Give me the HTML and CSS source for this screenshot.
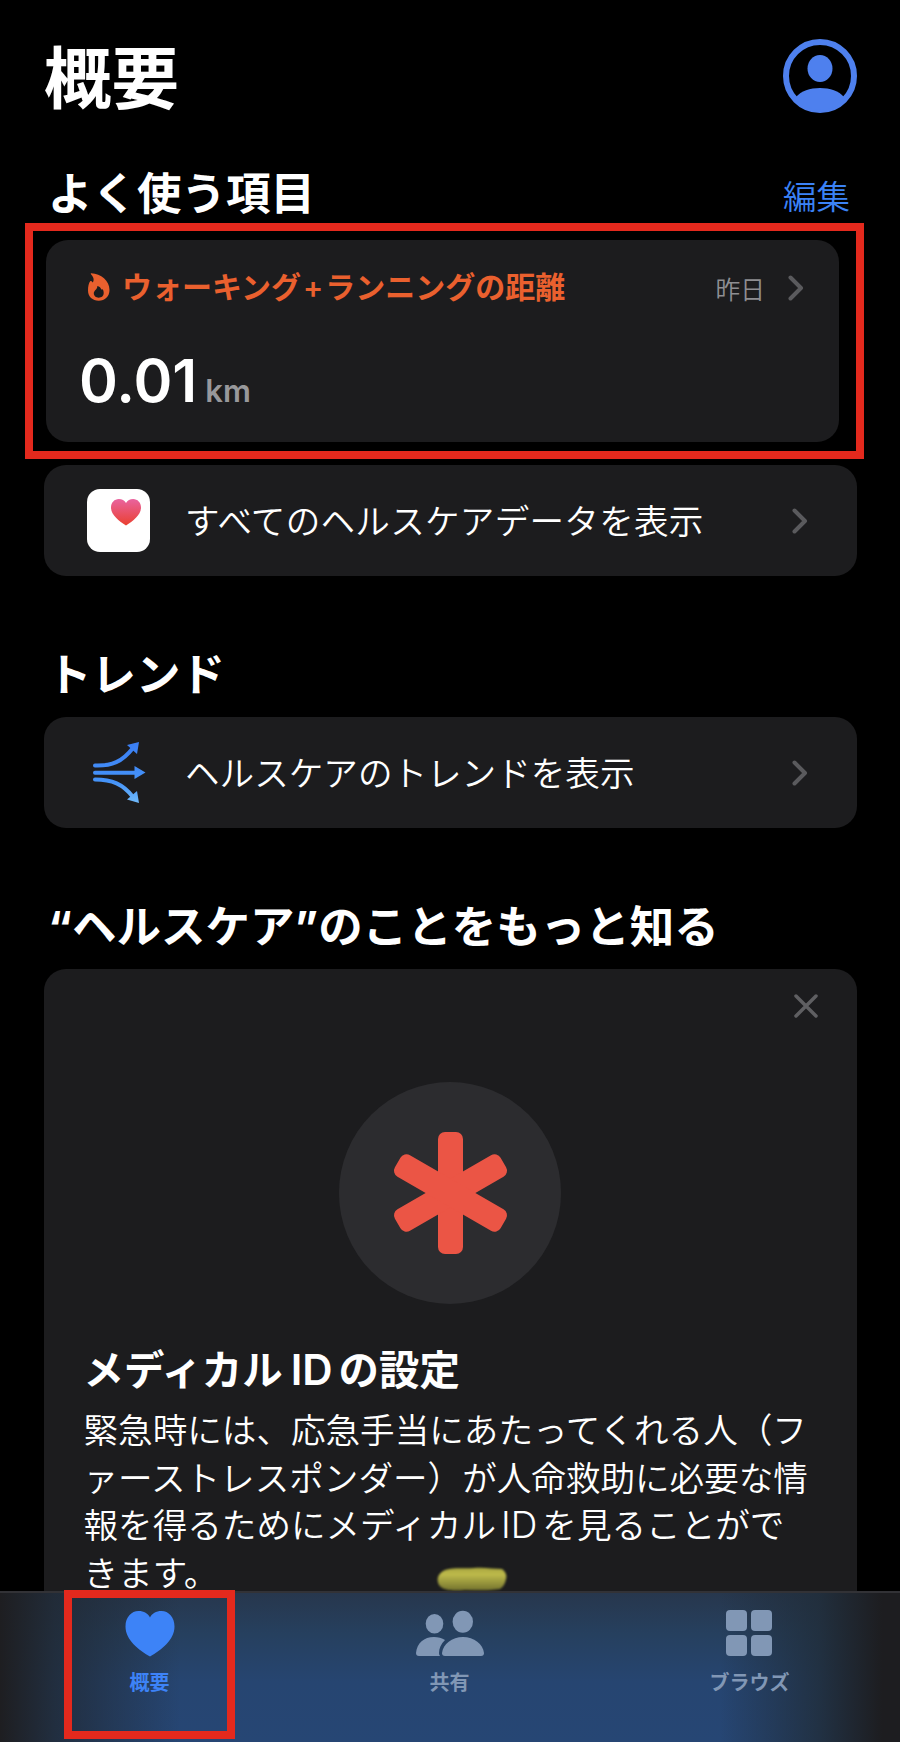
FILE: index.html
```html
<!DOCTYPE html>
<html lang="ja">
<head>
    <meta charset="UTF-8">
    <meta name="viewport" content="width=device-width, initial-scale=1">
    <title>概要</title>
    <link rel="stylesheet" href="styles.css">
</head>
<body>
<main class="content">
    <header class="header">
        <h1>概要</h1>
        <svg class="avatar" viewBox="0 0 74 74">
            <circle cx="37" cy="37" r="34" fill="none" stroke="#4e80ee" stroke-width="6"/>
            <ellipse cx="37" cy="29.5" rx="12.5" ry="13.5" fill="#4e80ee"/>
            <path d="M13 58C18 52 27 49 37 49S56 52 61 58C55 66 47 71 37 71S19 66 13 58Z" fill="#4e80ee"/>
        </svg>
    </header>

    <div class="section-title first">
        <h2>よく使う項目</h2>
        <a class="edit">編集</a>
    </div>
    <div class="highlight">
        <div class="card metric">
            <div class="metric-head">
                <svg class="flame" viewBox="0 0 22 28">
                    <path fill="#ea602e" fill-rule="evenodd" d="M3.200 .3C13 .8 21.500 7.500 21.500 17C21.500 23.500 17 27.700 10.700 27.700C4.500 27.700 0 23.700 0 17.500C0 13.500 .8 9.500 2.200 8.200C3 7.600 4 8.500 4.800 9.500C6 7.500 6.300 5 3.200 1.500C2.600 .8 2.700 .3 3.200 .3ZM9.300 13C9.800 16 5.800 17.500 5.800 20.300C5.800 23 8 24.700 10.700 24.700C13.600 24.700 15.700 22.800 15.700 20C15.700 17.300 14.500 15.300 13.300 16.800C13 15 11.500 13.300 9.300 13Z"/>
                </svg>
                <span class="metric-name">ウォーキング<span class="latin">+</span>ランニングの距離</span>
                <span class="metric-date">昨日</span>
                <svg class="chevron" viewBox="0 0 16 26"><path d="M2.500 2.500L13 13L2.500 23.500"/></svg>
            </div>
            <div class="metric-value">0.01<span class="unit">km</span></div>
        </div>
    </div>
    <div class="card row">
        <svg class="row-icon" viewBox="0 0 63 63">
            <defs>
                <linearGradient id="pink" x1="0" y1="0" x2="0" y2="1">
                    <stop offset="0" stop-color="#e9639f"/>
                    <stop offset="1" stop-color="#ea4030"/>
                </linearGradient>
            </defs>
            <rect width="63" height="63" rx="13" fill="#fff"/>
            <path d="M39 36.500C32 32 24 26 24 18.500C24 13.500 27.500 10 31.800 10C35 10 37.500 11.500 39 14C40.500 11.500 43 10 46.200 10C50.500 10 54 13.500 54 18.500C54 26 46 32 39 36.500Z" fill="url(#pink)"/>
        </svg>
        <span class="row-text wide">すべてのヘルスケアデータを表示</span>
        <svg class="chevron" viewBox="0 0 16 26"><path d="M2.500 2.500L13 13L2.500 23.500"/></svg>
    </div>

    <div class="section-title">
        <h2 class="trend-title">トレンド</h2>
    </div>
    <div class="card row">
        <svg class="row-icon" viewBox="0 0 63 63">
            <defs>
                <linearGradient id="blue" gradientUnits="userSpaceOnUse" x1="0" y1="0" x2="0" y2="63">
                    <stop offset="0" stop-color="#3a7df4"/>
                    <stop offset=".65" stop-color="#4593f8"/>
                    <stop offset="1" stop-color="#72bcfb"/>
                </linearGradient>
            </defs>
            <g fill="none" stroke="url(#blue)" stroke-width="4" stroke-linecap="round">
                <path d="M8 24.500C25 25 35 21 46 7"/>
                <path d="M8 31.800L50 31.700"/>
                <path d="M8 38.500C25 38.500 36 43 46 56"/>
            </g>
            <path d="M52 1L40 4L50 13ZM58.500 31.500L47.500 25V38ZM52 62L40 58.500L50 50Z" fill="url(#blue)"/>
        </svg>
        <span class="row-text">ヘルスケアのトレンドを表示</span>
        <svg class="chevron" viewBox="0 0 16 26"><path d="M2.500 2.500L13 13L2.500 23.500"/></svg>
    </div>

    <div class="section-title learn">
        <h2><span class="latin">“</span>ヘルスケア<span class="latin">”</span>のことをもっと知る</h2>
    </div>
    <div class="card article">
        <svg class="close" viewBox="0 0 24 24"><path d="M2 2L22 22M22 2L2 22"/></svg>
        <svg class="medical" viewBox="0 0 222 222">
            <circle cx="111" cy="111" r="111" fill="#2c2c2f"/>
            <g fill="#eb5545">
                <rect x="99" y="50" width="25" height="122" rx="7"/>
                <rect x="99" y="50" width="25" height="122" rx="7" transform="rotate(60 111.500 111)"/>
                <rect x="99" y="50" width="25" height="122" rx="7" transform="rotate(-60 111.500 111)"/>
            </g>
        </svg>
        <h3>メディカル<span class="latin">ID</span>の設定</h3>
        <p>緊急時には、応急手当にあたってくれる人（フ<br>ァーストレスポンダー）が人命救助に必要な情<br>報を得るためにメディカル<span class="latin">ID</span>を見ることがで<br>きます。</p>
        <svg class="marker" viewBox="0 0 72 26">
            <defs>
                <linearGradient id="yellow" x1="0" y1="0" x2="0" y2="1">
                    <stop offset="0" stop-color="#a9a740"/>
                    <stop offset=".3" stop-color="#bdba4b"/>
                    <stop offset="1" stop-color="#73722e"/>
                </linearGradient>
            </defs>
            <path d="M9 4C20 1 29 3 38 2C48 1 58 3 66 3C70 6 71 10 70 13C69 18 67 21 64 23C52 25 40 24 29 24C20 25 10 25 5 21C0 17 0 8 9 4Z" fill="url(#yellow)"/>
        </svg>
    </div>
</main>

<nav class="tabbar">
    <a class="tab active">
        <svg class="tab-icon" viewBox="0 0 70 48">
            <path d="M35 47.500C24 41 10.500 31 10.500 17.500C10.500 8 16.500 2 23.500 2C29 2 33 4.500 35 8.500C37 4.500 41 2 46.500 2C53.500 2 59.500 8 59.500 17.500C59.500 31 46 41 35 47.500Z"/>
        </svg>
        <span>概要</span>
    </a>
    <a class="tab">
        <svg class="tab-icon" viewBox="0 0 70 48">
            <ellipse cx="19.500" cy="14.800" rx="8.800" ry="9.800"/>
            <ellipse cx="47.800" cy="12.800" rx="10.200" ry="11"/>
            <path d="M4 47Q1 47 1 44C2 34 9 28 19 28C23 28 27 29 30 31C26 35 24 39 24 44Q24 46 25 47Z"/>
            <path d="M30 47Q27 47 27 44C28 35 37 28 48 28C59 28 68 35 69 44Q69 47 66 47Z"/>
        </svg>
        <span>共有</span>
    </a>
    <a class="tab">
        <svg class="tab-icon" viewBox="0 0 70 48">
            <rect x="11" y="1" width="21" height="21" rx="4"/>
            <rect x="36" y="1" width="21" height="21" rx="4"/>
            <rect x="11" y="26" width="21" height="21" rx="4"/>
            <rect x="36" y="26" width="21" height="21" rx="4"/>
        </svg>
        <span>ブラウズ</span>
    </a>
</nav>
</body>
</html>
```
FILE: styles.css
```css
*, *::after {
    box-sizing: border-box;
    margin: 0;
}
body {
    display: flex;
    flex-direction: column;
    width: 900px;
    height: 1742px;
    overflow: hidden;
    background-color: #000;
    color: #fff;
    font-family: "Noto Sans CJK JP", sans-serif;
}
svg {
    display: block;
    flex: none;
}
.latin {
    font-family: Inter, sans-serif;
}
.content {
    flex: 1;
    min-height: 0;
}
.header {
    display: flex;
    justify-content: space-between;
    align-items: center;
    height: 154px;
    padding: 0 43px 2px 44px;
}
h1 {
    margin-top: -4px;
    font-size: 67.500px;
    line-height: 80px;
    font-weight: 700;
}
.avatar {
    width: 74px;
    height: 74px;
}
.section-title {
    display: flex;
    justify-content: space-between;
    align-items: center;
    height: 141px;
    padding: 50px 50px 0 48px;
}
.section-title.first {
    height: 69px;
    padding-top: 5px;
}
.section-title.learn {
    padding-top: 54px;
}
h2 {
    font-size: 44.500px;
    line-height: 60px;
    font-weight: 700;
}
.trend-title {
    margin-left: -1px;
}
.edit {
    padding-top: 7px;
    color: #3b82f6;
    font-size: 33.500px;
    font-weight: 350;
    line-height: 40px;
}
.highlight {
    width: 839px;
    height: 236px;
    margin: 0 0 6px 25px;
    padding: 9px 17px 9px 13px;
    border: 8px solid #e4291d;
}
.card {
    background-color: #1c1c1e;
    border-radius: 22px;
}
.metric {
    height: 202px;
    padding: 27px 35px 0 33px;
}
.metric-head {
    display: flex;
    align-items: center;
    height: 42px;
}
.flame {
    width: 22px;
    height: 28px;
    margin: -3px 12px 0 9px;
}
.metric-name {
    margin-top: -4px;
    color: #ea602e;
    font-size: 30px;
    line-height: 40px;
    font-weight: 700;
    flex: 1;
}
.metric-name .latin {
    margin: 0 2px;
    font-weight: 600;
}
.metric-date {
    margin-right: 23px;
    color: #8e8e92;
    font-size: 24.800px;
    font-weight: 350;
    line-height: 40px;
}
.chevron {
    width: 16px;
    height: 26px;
    fill: none;
    stroke: #5a5a5d;
    stroke-width: 4;
    stroke-linecap: round;
    stroke-linejoin: round;
}
.metric-value {
    margin-top: 37px;
    font-family: Inter, sans-serif;
    font-size: 59px;
    line-height: 70px;
    font-weight: 600;
}
.unit {
    margin-left: 8px;
    color: #98989b;
    font-size: 31px;
}
.row {
    display: flex;
    align-items: center;
    height: 111px;
    margin: 0 43.500px;
    padding: 0 48.500px 0 43.500px;
}
.row-icon {
    width: 63px;
    height: 63px;
}
.row-text {
    flex: 1;
    margin: -4px 0 0 35px;
    font-size: 34.600px;
    line-height: 48px;
    font-weight: 350;
}
.row-text.wide {
    letter-spacing: 0.250px;
}
.article {
    position: relative;
    height: 622px;
    margin: 0 43.500px;
    padding: 113px 0 0 40px;
    border-radius: 22px 22px 0 0;
}
.close {
    position: absolute;
    top: 25px;
    right: 39px;
    width: 24px;
    height: 24px;
    stroke: #5f5f62;
    stroke-width: 3.500;
    stroke-linecap: round;
}
.medical {
    width: 222px;
    height: 222px;
    margin-left: 255.500px;
}
h3 {
    margin-top: 40px;
    font-size: 40.400px;
    line-height: 48px;
    font-weight: 700;
}
h3 .latin {
    margin: 0 6px 0 8px;
    font-size: 42px;
    line-height: 40px;
    font-weight: 600;
}
.article p {
    margin-top: 13px;
    font-size: 34.600px;
    line-height: 47.700px;
    font-weight: 350;
    white-space: nowrap;
}
p .latin {
    margin: 0 5px;
    font-size: 37px;
    line-height: 40px;
}
.marker {
    position: absolute;
    top: 597px;
    left: 392px;
    width: 72px;
    height: 26px;
    filter: blur(1px);
}
.tabbar {
    position: relative;
    display: flex;
    height: 151px;
    border-top: 2px solid #323236;
    background: linear-gradient(to right, #1e1e21 0, rgba(32, 40, 50, 0.8) 6%, rgba(36, 60, 90, 0) 20%, rgba(36, 60, 90, 0) 80%, rgba(32, 44, 56, 0.8) 91%, #1d1d20 98%), linear-gradient(to bottom, #27374d 0, #26405f 28%, #264571 60%, #264674 100%);
}
.tab {
    flex: 1;
    display: flex;
    flex-direction: column;
    align-items: center;
    padding-top: 16px;
    color: #8197b5;
    font-size: 20px;
    line-height: 28px;
    font-weight: 700;
}
.tab span {
    padding-right: 1px;
}
.tab-icon {
    width: 70px;
    height: 48px;
    margin-bottom: 11px;
    fill: #8197b5;
}
.active {
    position: relative;
    color: #3d83f7;
}
.active .tab-icon {
    margin-right: 1px;
    fill: #3d83f7;
}
/* frame around the selected tab */
.active::after {
    content: "";
    position: absolute;
    top: -3px;
    left: 64px;
    width: 171px;
    height: 149px;
    border: 8px solid #e4291d;
}
```
